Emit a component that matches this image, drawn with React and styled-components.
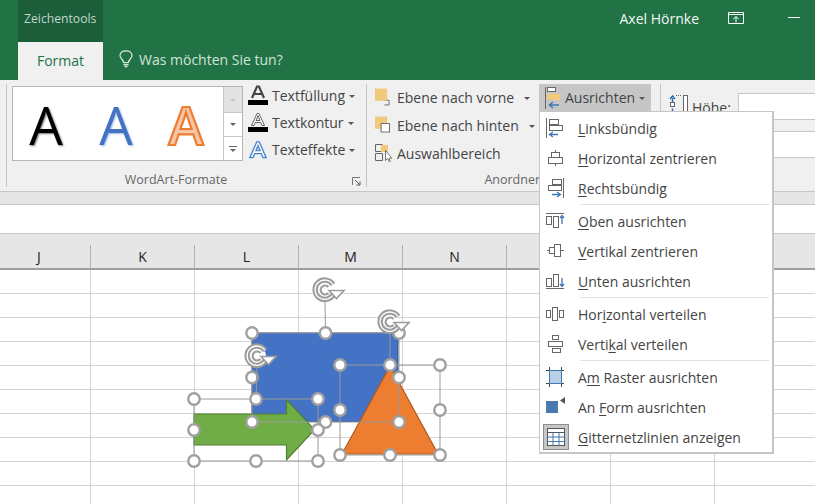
import styled, { createGlobalStyle } from "styled-components";

const GlobalStyle = createGlobalStyle`
  html, body {
    margin: 0;
    padding: 0;
    background: #fff;
  }
  * {
    box-sizing: border-box;
  }
`;

const COLUMNS = ["J", "K", "L", "M", "N", "", "", ""];
const ROWS = 10;

const Caret = () => <CaretMark />;

/* ---- ribbon icons ---- */
const FillIcon = () => (
  <svg width="20" height="22" viewBox="0 0 20 22">
    <path d="M4 13 L9 1.5 h2 L16 13 M6 9 h8" fill="none" stroke="#444" strokeWidth="2.2" />
    <rect x="0" y="15" width="20" height="5" fill="#000" />
  </svg>
);
const OutlineIcon = () => (
  <svg width="20" height="22" viewBox="0 0 20 22">
    <path d="M3.5 13.5 L9 1.5 h2 L16.500 13.500 h-2.500 l-1.200 -3 h-5.600 l-1.200 3 z M8 8.500 h4 L10 3.500 z" fill="#fff" stroke="#555" strokeWidth="0.9" />
    <rect x="0" y="15" width="20" height="5" fill="#000" />
  </svg>
);
const EffectIcon = () => (
  <svg width="20" height="20" viewBox="0 0 20 20">
    <path d="M2 17.500 L8.800 2 h2.400 L18 17.500 h-3 l-1.600 -4 h-6.800 l-1.600 4 z M7.800 10.800 h4.400 L10 5.500 z" fill="#fff" stroke="#b9d3ee" strokeWidth="2.400" />
    <path d="M2 17.500 L8.800 2 h2.400 L18 17.500 h-3 l-1.600 -4 h-6.800 l-1.600 4 z M7.800 10.800 h4.400 L10 5.500 z" fill="#fff" stroke="#3f7cc4" strokeWidth="1.100" />
  </svg>
);
const ForwardIcon = () => (
  <svg width="16" height="18" viewBox="0 0 16 18">
    <path d="M9 12.500 h6 v5 h-5" fill="none" stroke="#666" />
    <rect x="0" y="0" width="13" height="13" fill="#f0c97c" />
  </svg>
);
const BackwardIcon = () => (
  <svg width="16" height="18" viewBox="0 0 16 18">
    <rect x="0" y="0" width="13" height="13" fill="#f0c97c" />
    <rect x="6.500" y="7.500" width="9" height="9" fill="#fff" stroke="#666" />
  </svg>
);
const SelectionIcon = () => (
  <svg width="19" height="18" viewBox="0 0 19 18">
    <path d="M7.500 .5 h-7 v7 h7 M.5 9.500 h7 v7 h-7 z" fill="none" stroke="#666" />
    <rect x="6" y="1" width="7" height="7" fill="#f0c97c" />
    <path d="M10.500 6.500 v10 l2.200 -2 1.500 3.300 1.200 -.6 -1.400 -3 h2.800 z" fill="#fff" stroke="#555" strokeWidth=".8" />
  </svg>
);
const AlignButtonIcon = () => (
  <svg width="16" height="22" viewBox="0 0 16 22">
    <path d="M.5 0 v22" stroke="#666" />
    <rect x="2.500" y=".5" width="8" height="4" fill="#fff" stroke="#666" />
    <rect x="2" y="7" width="13" height="6" fill="#f0c97c" />
    <path d="M14 18 h-9 M8 15 l-3.500 3 3.500 3" fill="none" stroke="#3f78b5" strokeWidth="1.600" />
  </svg>
);
const HeightIcon = () => (
  <svg width="20" height="24" viewBox="0 0 20 24">
    <path d="M3.500 8 v-5 M1 4 l2.500 -3 2.500 3" fill="none" stroke="#2f6fb0" strokeWidth="1.500" />
    <rect x="1.500" y="7.500" width="4" height="4" fill="#fff" stroke="#666" />
    <path d="M3.500 13.500 v5 M1 17 l2.500 3 2.500 -3" fill="none" stroke="#2f6fb0" strokeWidth="1.500" />
    <rect x="14.500" y=".5" width="4" height="23" fill="#fff" stroke="#666" />
    <path d="M7 .5 h6" stroke="#666" strokeDasharray="1 1" />
  </svg>
);
const LauncherIcon = () => (
  <svg width="9" height="9" viewBox="0 0 9 9">
    <path d="M.5 8 v-7.500 h7.500" fill="none" stroke="#777" />
    <path d="M3 3 l4.500 4.500 M8 4.500 v3.500 h-3.500" fill="none" stroke="#555" />
  </svg>
);
const BulbIcon = () => (
  <svg width="14" height="18" viewBox="0 0 14 18">
    <path d="M4.500 12.500 C4.500 9.500 1 8.500 1 5.500 C1 2.500 3.800 .8 7 .8 C10.200 .8 13 2.500 13 5.500 C13 8.500 9.500 9.500 9.500 12.500 z" fill="none" stroke="#dbe9e0" strokeWidth="1.200" />
    <path d="M4.500 14.500 h5 M5.500 16.500 h3" stroke="#dbe9e0" strokeWidth="1.400" />
  </svg>
);
const ShareIcon = () => (
  <svg width="16" height="12" viewBox="0 0 16 12">
    <path d="M.5 11.500 v-11 h15 v11 z M.5 2.500 h15" fill="none" stroke="#fff" />
    <path d="M8 10.500 v-6 M5.500 7 l2.500 -2.500 2.500 2.500" fill="none" stroke="#fff" />
  </svg>
);

/* ---- menu icons ---- */
const G = "#666";
const B = "#3f78b5";
const MenuIcons = {
  left: (
    <>
      <path d="M.5 0 v20" stroke={G} />
      <rect x="3.500" y="1.500" width="9" height="5" fill="#fff" stroke={G} />
      <rect x="3.500" y="7.500" width="13" height="5" fill="#fff" stroke={G} />
      <path d="M12 16.500 h-8 M7 14 l-3.500 2.500 3.500 2.500" fill="none" stroke={B} strokeWidth="1.300" />
    </>
  ),
  hcenter: (
    <>
      <path d="M9.500 2 v16" stroke={G} />
      <rect x="5.500" y="4.500" width="8" height="5" fill="#fff" stroke={G} />
      <rect x="2.500" y="9.500" width="14" height="6" fill="#fff" stroke={G} />
    </>
  ),
  right: (
    <>
      <path d="M17.500 0 v20" stroke={G} />
      <rect x="6.500" y="1.500" width="9" height="5" fill="#fff" stroke={G} />
      <rect x="2.500" y="7.500" width="13" height="5" fill="#fff" stroke={G} />
      <path d="M6 16.500 h8 M11 14 l3.500 2.500 -3.500 2.500" fill="none" stroke={B} strokeWidth="1.300" />
    </>
  ),
  top: (
    <>
      <path d="M0 2.500 h18" stroke={G} />
      <rect x=".5" y="5.500" width="5" height="8" fill="#fff" stroke={G} />
      <rect x="7.500" y="5.500" width="5" height="11" fill="#fff" stroke={G} />
      <path d="M16 13 v-8 M14 7 l2 -2.500 2 2.500" fill="none" stroke={B} strokeWidth="1.300" />
    </>
  ),
  vcenter: (
    <>
      <path d="M1 9.500 h17" stroke={G} />
      <rect x="3.500" y="6.500" width="5" height="6" fill="#fff" stroke={G} />
      <rect x="8.500" y="3.500" width="6" height="12" fill="#fff" stroke={G} />
    </>
  ),
  bottom: (
    <>
      <path d="M0 17.500 h18" stroke={G} />
      <rect x=".5" y="7.500" width="5" height="8" fill="#fff" stroke={G} />
      <rect x="7.500" y="3.500" width="5" height="12" fill="#fff" stroke={G} />
      <path d="M16 7 v8 M14 13 l2 2.500 2 -2.500" fill="none" stroke={B} strokeWidth="1.300" />
    </>
  ),
  hdist: (
    <>
      <rect x=".5" y="6.500" width="4" height="7" fill="#fff" stroke={G} />
      <rect x="6.500" y="3.500" width="5" height="13" fill="#fff" stroke={G} />
      <rect x="13.500" y="6.500" width="4" height="7" fill="#fff" stroke={G} />
    </>
  ),
  vdist: (
    <>
      <rect x="6.500" y="1.500" width="6" height="4" fill="#fff" stroke={G} />
      <rect x="2.500" y="7.500" width="14" height="5" fill="#fff" stroke={G} />
      <rect x="6.500" y="14.500" width="8" height="4" fill="#fff" stroke={G} />
    </>
  ),
  grid: (
    <>
      <path d="M0 3.500 h18 M0 16.500 h18 M3.500 0 v20 M15.500 0 v20" stroke="#444" />
      <rect x="3.500" y="3.500" width="12" height="13" fill="#b8cfe6" stroke="#3f78b5" />
    </>
  ),
  shape: (
    <>
      <rect x="0" y="4" width="12" height="12" fill="#4a7ab0" />
      <path d="M19 0 v7 l-5 -3.500 z" fill="#555" />
    </>
  ),
};

const SHEET = (
  <svg width="18" height="18" viewBox="0 0 18 18">
    <rect x=".5" y=".5" width="17" height="17" fill="#fff" stroke="#555" />
    <rect x=".5" y=".5" width="17" height="4" fill="#fff" stroke="#555" />
    <path d="M6 4.500 v13 M12 4.500 v13 M.5 9 h17 M.5 13.500 h17" stroke="#3f78b5" />
  </svg>
);

/* label with one underlined access key */
const MENU_GROUPS = [
  [
    { icon: "left", pre: "", key_: "L", post: "inksbündig" },
    { icon: "hcenter", pre: "", key_: "H", post: "orizontal zentrieren" },
    { icon: "right", pre: "", key_: "R", post: "echtsbündig" },
  ],
  [
    { icon: "top", pre: "", key_: "O", post: "ben ausrichten" },
    { icon: "vcenter", pre: "", key_: "V", post: "ertikal zentrieren" },
    { icon: "bottom", pre: "", key_: "U", post: "nten ausrichten" },
  ],
  [
    { icon: "hdist", pre: "Hor", key_: "i", post: "zontal verteilen" },
    { icon: "vdist", pre: "Verti", key_: "k", post: "al verteilen" },
  ],
  [
    { icon: "grid", pre: "A", key_: "m", post: " Raster ausrichten" },
    { icon: "shape", pre: "An ", key_: "F", post: "orm ausrichten" },
    { icon: "sheet", pre: "", key_: "G", post: "itternetzlinien anzeigen", active: true },
  ],
];

/* ---- shapes on the sheet ---- */
const Handle = ({ x, y }) => (
  <circle cx={x} cy={y} r="5.700" fill="#fff" stroke="#a0a0a0" strokeWidth="2.400" />
);

const Frame = ({ x1, y1, x2, y2, rot }) => {
  const mx = (x1 + x2) / 2;
  const my = (y1 + y2) / 2;
  return (
    <g>
      <rect x={x1} y={y1} width={x2 - x1} height={y2 - y1} fill="none" stroke="#999" />
      <path d={`M${rot.x} ${rot.y + 8} L${mx} ${y1}`} stroke="#999" />
      {[
        [x1, y1], [mx, y1], [x2, y1], [x1, my], [x2, my], [x1, y2], [mx, y2], [x2, y2],
      ].map(([x, y]) => (
        <Handle key={`${x}-${y}`} x={x} y={y} />
      ))}
    </g>
  );
};

const Rotate = ({ x, y }) => (
  <g transform={`translate(${x} ${y})`}>
    <circle r="9" fill="#fff" />
    <path d="M8.500 4 A9.700 9.700 0 1 1 8 -5.500" fill="none" stroke="#9c9c9c" strokeWidth="5.400" />
    <path d="M8.500 4 A9.700 9.700 0 1 1 8 -5.500" fill="none" stroke="#fff" strokeWidth="1.300" />
    <path d="M3.500 -3 A4.500 4.500 0 1 0 3.500 3" fill="none" stroke="#9c9c9c" strokeWidth="2.200" />
    <path d="M4 .5 h15 l-7.500 8 z" fill="#fff" stroke="#9c9c9c" strokeWidth="1.600" />
  </g>
);

const Shapes = () => (
  <ShapesLayer viewBox="0 0 815 504">
    <rect x="252" y="333" width="146" height="88.500" fill="#4472c4" stroke="#2f528f" />
    <path d="M194 414 H286.500 V399.500 L314.500 429.700 L286.500 460 V445 H194 z" fill="#70ad47" stroke="#507e32" strokeWidth="1.200" />
    <path d="M342 454 L390 366 L438 454 z" fill="#ed7d31" stroke="#ae5a21" strokeWidth="1.200" />
    <Frame x1={252} y1={333} x2={399} y2={422} rot={{ x: 325, y: 290 }} />
    <Frame x1={194} y1={399} x2={318} y2={461} rot={{ x: 257, y: 356 }} />
    <Frame x1={340} y1={365} x2={440} y2={455} rot={{ x: 390, y: 322 }} />
    <Rotate x={325} y={290} />
    <Rotate x={257} y={356} />
    <Rotate x={390} y={322} />
  </ShapesLayer>
);

export default function App() {
  return (
    <Page>
      <GlobalStyle />
      <TitleBar>
        <TopRow>
          <ContextTab>Zeichentools</ContextTab>
          <UserName>Axel Hörnke</UserName>
          <ShareSlot>
            <ShareIcon />
          </ShareSlot>
          <Minimize />
        </TopRow>
        <TabRow>
          <FormatTab>Format</FormatTab>
          <TellMe>
            <BulbIcon />
            <span>Was möchten Sie tun?</span>
          </TellMe>
        </TabRow>
      </TitleBar>

      <Ribbon>
        <Stub />
        <WordArtGroup>
          <GroupBody>
            <Gallery>
              <GalleryItems>
                <GalleryA $kind="black">A</GalleryA>
                <GalleryA $kind="blue">A</GalleryA>
                <GalleryA $kind="orange">A</GalleryA>
              </GalleryItems>
              <GalleryScroll>
                <ScrollButton $disabled $h={26}>
                  <ScrollArrow $up $color="#c4c4c4" />
                </ScrollButton>
                <ScrollButton $h={24}>
                  <ScrollArrow $color="#666" />
                </ScrollButton>
                <ScrollButton $h={23} $more>
                  <MoreLine />
                  <ScrollArrow $color="#666" />
                </ScrollButton>
              </GalleryScroll>
            </Gallery>
            <CommandList>
              <Command $gap={4}>
                <IconSlot $w={20}><FillIcon /></IconSlot>
                Textfüllung <Caret />
              </Command>
              <Command $gap={4}>
                <IconSlot $w={20}><OutlineIcon /></IconSlot>
                Textkontur <Caret />
              </Command>
              <Command $gap={4}>
                <IconSlot $w={20}><EffectIcon /></IconSlot>
                Texteffekte <Caret />
              </Command>
            </CommandList>
          </GroupBody>
          <GroupLabel $shift={26}>
            WordArt-Formate
            <Launcher><LauncherIcon /></Launcher>
          </GroupLabel>
        </WordArtGroup>

        <ArrangeGroup>
          <GroupBody>
            <ArrangeList>
              <Command $gap={7} $h={28}>
                <IconSlot $w={15}><ForwardIcon /></IconSlot>
                Ebene nach vorne <WideCaret />
              </Command>
              <Command $gap={7} $h={28}>
                <IconSlot $w={15}><BackwardIcon /></IconSlot>
                Ebene nach hinten <WideCaret />
              </Command>
              <Command $gap={3} $h={28}>
                <IconSlot $w={19}><SelectionIcon /></IconSlot>
                Auswahlbereich
              </Command>
            </ArrangeList>
            <AlignButton>
              <AlignButtonIcon />
              Ausrichten <Caret />
            </AlignButton>
          </GroupBody>
          <GroupLabel $shift={8}>Anordnen</GroupLabel>
        </ArrangeGroup>

        <SizeGroup>
          <SizeRow>
            <HeightIcon />
            <SizeLabel>Höhe:</SizeLabel>
            <SizeInput />
          </SizeRow>
          <SizeRow>
            <SizeSpacer />
            <SizeInput />
          </SizeRow>
        </SizeGroup>
      </Ribbon>

      <Strip />
      <FormulaBar />

      <Sheet>
        <HeaderRow>
          {COLUMNS.map((c, i) => (
            <HeaderCell key={i} $first={i === 0}>{c}</HeaderCell>
          ))}
        </HeaderRow>
        {Array.from({ length: ROWS }).map((_, r) => (
          <GridRow key={r}>
            {COLUMNS.map((_, i) => (
              <GridCell key={i} $first={i === 0} />
            ))}
          </GridRow>
        ))}
      </Sheet>

      <Shapes />

      <Menu>
        {MENU_GROUPS.map((group, g) => (
          <MenuGroup key={g} $first={g === 0}>
            {group.map((item) => (
              <MenuItem key={item.post}>
                <MenuIconSlot $active={item.active}>
                  {item.icon === "sheet" ? (
                    SHEET
                  ) : (
                    <svg width="20" height="20" viewBox="0 0 20 20">{MenuIcons[item.icon]}</svg>
                  )}
                </MenuIconSlot>
                <MenuText>
                  {item.pre}
                  <u>{item.key_}</u>
                  {item.post}
                </MenuText>
              </MenuItem>
            ))}
          </MenuGroup>
        ))}
      </Menu>
    </Page>
  );
}

const FONT = `"Open Sans", "Noto Sans", "Liberation Sans", sans-serif`;

const Page = styled.div`
  position: relative;
  width: 815px;
  height: 504px;
  overflow: hidden;
  background: #fff;
  font-family: ${FONT};
  color: #444;
`;

const TitleBar = styled.div`
  height: 80px;
  background: #217346;
  padding-left: 18px;
  color: #fff;
`;
const TopRow = styled.div`
  display: flex;
  align-items: stretch;
  height: 42px;
`;
const ContextTab = styled.div`
  width: 85px;
  background: #1b5e39;
  color: #c3d6ca;
  font-size: 12.2px;
  padding: 10px 0 0 6px;
`;
const UserName = styled.div`
  margin-left: auto;
  font-size: 14px;
  padding-top: 9px;
  color: #f4f8f5;
`;
const ShareSlot = styled.div`
  width: 16px;
  margin: 12px 0 0 29px;
  line-height: 0;
`;
const Minimize = styled.div`
  width: 12px;
  height: 1px;
  background: #fff;
  margin: 17px 15px 0 44px;
`;
const TabRow = styled.div`
  display: flex;
  height: 38px;
`;
const FormatTab = styled.div`
  width: 85px;
  background: #f0f0f0;
  color: #217346;
  font-size: 14px;
  text-align: center;
  padding-top: 9px;
`;
const TellMe = styled.div`
  display: flex;
  align-items: center;
  gap: 6px;
  margin-left: 16px;
  color: #d3e3d9;
  font-size: 14px;
  padding-bottom: 4px;
`;

const Ribbon = styled.div`
  display: flex;
  height: 112px;
  background: #f0f0f0;
  border-bottom: 1px solid #c6c6c6;
  padding-top: 4px;
  font-size: 14px;
`;
const Stub = styled.div`
  width: 7px;
  height: 103px;
  border-right: 1px solid #c6c6c6;
`;
const GroupBody = styled.div`
  display: flex;
  flex: 1;
`;
const GroupLabel = styled.div`
  position: relative;
  height: 18px;
  padding-right: ${(p) => p.$shift}px;
  font-size: 12.5px;
  line-height: 22px;
  color: #666;
  text-align: center;
`;
const Launcher = styled.span`
  position: absolute;
  right: 5px;
  top: 8px;
  line-height: 0;
`;
const WordArtGroup = styled.div`
  display: flex;
  flex-direction: column;
  width: 360px;
  height: 103px;
  padding-left: 5px;
  border-right: 1px solid #c6c6c6;
`;
const Gallery = styled.div`
  display: flex;
  width: 231px;
  height: 75px;
  margin-top: 2px;
  border: 1px solid #b5b5b5;
  background: #fff;
`;
const GalleryItems = styled.div`
  display: flex;
  width: 212px;
  margin-left: -2px;
`;
const GalleryA = styled.span`
  width: 70px;
  text-align: center;
  font-family: "Open Sans", sans-serif;
  font-size: 53px;
  line-height: 76px;
  ${(p) => p.$kind === "black" && `color: #000; text-shadow: 1px 1px 2px rgba(0,0,0,.55);`}
  ${(p) => p.$kind === "blue" && `color: #4472c4; text-shadow: 1px 1px 2px rgba(68,114,196,.5);`}
  ${(p) => p.$kind === "orange" && `color: #f6c6a6; font-weight: 600; -webkit-text-stroke: 2.2px #ed7d31;`}
`;
const GalleryScroll = styled.div`
  flex: 1;
  display: flex;
  flex-direction: column;
  border-left: 1px solid #c6c6c6;
  background: #f0f0f0;
`;
const ScrollButton = styled.div`
  height: ${(p) => p.$h}px;
  display: flex;
  flex-direction: column;
  align-items: center;
  justify-content: center;
  gap: 2px;
  background: ${(p) => (p.$disabled ? "#e2e2e2" : "#fff")};
  border-bottom: ${(p) => (p.$more ? "0" : "1px solid #c6c6c6")};
`;
const ScrollArrow = styled.span`
  width: 0;
  height: 0;
  border-left: 3px solid transparent;
  border-right: 3px solid transparent;
  ${(p) => (p.$up ? `border-bottom: 3px solid ${p.$color};` : `border-top: 3px solid ${p.$color};`)}
`;
const MoreLine = styled.span`
  width: 8px;
  height: 1px;
  background: #666;
`;
const CommandList = styled.div`
  display: flex;
  flex-direction: column;
  margin: -2px 0 0 5px;
`;
const Command = styled.div`
  display: flex;
  align-items: center;
  gap: ${(p) => p.$gap}px;
  height: ${(p) => p.$h || 27}px;
  white-space: nowrap;
`;
const IconSlot = styled.span`
  width: ${(p) => p.$w}px;
  display: flex;
  justify-content: center;
  line-height: 0;
`;
const CaretMark = styled.span`
  display: inline-block;
  width: 0;
  height: 0;
  margin-top: 2px;
  border-left: 3px solid transparent;
  border-right: 3px solid transparent;
  border-top: 3px solid #555;
`;
const WideCaret = styled(CaretMark)`
  margin-left: 3px;
`;
const ArrangeGroup = styled.div`
  display: flex;
  flex-direction: column;
  width: 294px;
  height: 103px;
  padding-left: 8px;
  border-right: 1px solid #c6c6c6;
`;
const ArrangeList = styled.div`
  display: flex;
  flex-direction: column;
  width: 164px;
  margin-top: -1px;
`;
const AlignButton = styled.div`
  display: flex;
  align-items: center;
  gap: 4px;
  width: 112px;
  height: 27px;
  padding-left: 6px;
  background: #c6c6c6;
  white-space: nowrap;
`;
const SizeGroup = styled.div`
  display: flex;
  flex-direction: column;
  gap: 11px;
  flex: 1;
  padding: 9px 0 0 8px;
`;
const SizeRow = styled.div`
  display: flex;
  align-items: center;
  gap: 3px;
  height: 27px;
`;
const SizeLabel = styled.span`
  width: 43px;
  padding-top: 2px;
`;
const SizeSpacer = styled.span`
  width: 66px;
`;
const SizeInput = styled.div`
  flex: 1;
  height: 27px;
  background: #fff;
  border: 1px solid #c6c6c6;
  border-right: 0;
`;

const Strip = styled.div`
  height: 13px;
  background: #e6e6e6;
  border-bottom: 1px solid #c6c6c6;
`;
const FormulaBar = styled.div`
  height: 29px;
  background: #fff;
  border-bottom: 1px solid #c6c6c6;
`;
const Sheet = styled.div`
  display: flex;
  flex-direction: column;
`;
const HeaderRow = styled.div`
  display: flex;
  align-items: flex-end;
  height: 36px;
  background: #e6e6e6;
  border-bottom: 2px solid #9f9f9f;
`;
const HeaderCell = styled.div`
  flex: none;
  width: ${(p) => (p.$first ? 91 : 104)}px;
  height: 23px;
  line-height: 23px;
  text-align: center;
  font-size: 14px;
  color: #222;
  border-right: 1px solid #b1b1b1;
  ${(p) => p.$first && `text-indent: -12px;`}
`;
const GridRow = styled.div`
  display: flex;
  height: 24px;
  border-bottom: 1px solid #d4d4d4;
`;
const GridCell = styled.div`
  flex: none;
  width: ${(p) => (p.$first ? 91 : 104)}px;
  border-right: 1px solid #d4d4d4;
`;

const ShapesLayer = styled.svg`
  position: absolute;
  left: 0;
  top: 0;
  width: 815px;
  height: 504px;
`;

const Menu = styled.div`
  position: absolute;
  left: 539px;
  top: 111px;
  width: 235px;
  height: 343px;
  padding: 1px 1px;
  background: #fff;
  border: 2px solid #c6c6c6;
  border-width: 1px 2px 2px 1px;
  display: flex;
  flex-direction: column;
`;
const MenuGroup = styled.div`
  padding-top: ${(p) => (p.$first ? 0 : 1)}px;
  &::before {
    content: "";
    display: ${(p) => (p.$first ? "none" : "block")};
    height: 1px;
    margin: 0 2px 1px 39px;
    background: #e2e2e2;
  }
`;
const MenuItem = styled.div`
  display: flex;
  align-items: center;
  height: 30px;
`;
const MenuIconSlot = styled.span`
  display: flex;
  align-items: center;
  justify-content: center;
  width: 26px;
  height: 26px;
  margin-left: 2px;
  line-height: 0;
  ${(p) => p.$active && `background: #c6c6c6; border: 1px solid #8f8f8f;`}
`;
const MenuText = styled.span`
  margin-left: 9px;
  font-size: 14px;
  color: #444;
  white-space: nowrap;
  u {
    text-underline-offset: 2px;
  }
`;
